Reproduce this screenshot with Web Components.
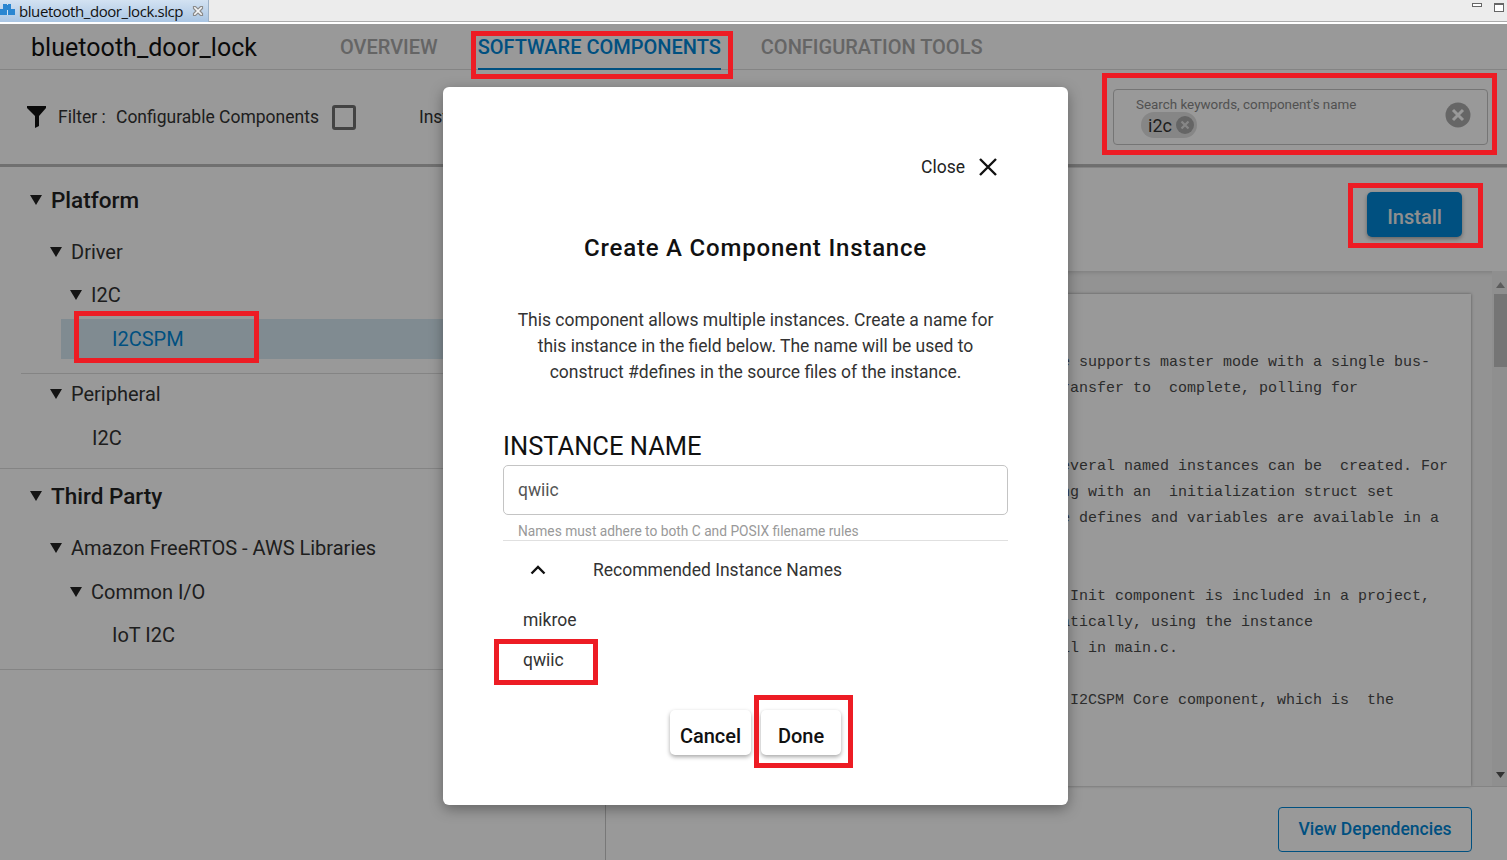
<!DOCTYPE html>
<html>
<head>
<meta charset="utf-8">
<title>bluetooth_door_lock.slcp</title>
<style>
  html, body { margin: 0; height: 100%; overflow: hidden; background: #fff; }
  body { font-family: Roboto, "Liberation Sans", sans-serif; color: #333; }
  .page { position: relative; width: 1507px; height: 860px; display: flex; flex-direction: column; overflow: hidden; }
  .main { flex: 1; display: flex; min-height: 0; }
</style>
</head>
<body>
<div class="page">
  <editor-tabbar name="bluetooth_door_lock.slcp"></editor-tabbar>
  <project-header name="bluetooth_door_lock"></project-header>
  <filter-bar></filter-bar>
  <div class="main">
    <component-tree>
      <tree-row heading arrow indent="51" style="margin-top:12px">Platform</tree-row>
      <tree-row arrow indent="71" style="margin-top:10px">Driver</tree-row>
      <tree-row arrow indent="91" style="margin-top:1px">I2C</tree-row>
      <tree-row selected indent="112" style="margin-top:3px">I2CSPM</tree-row>
      <tree-line inset="21" style="margin-top:14px"></tree-line>
      <tree-row arrow indent="71" style="margin-top:-1px">Peripheral</tree-row>
      <tree-row indent="92" style="margin-top:2px">I2C</tree-row>
      <tree-line style="margin-top:9px"></tree-line>
      <tree-row heading arrow indent="51" style="margin-top:6px">Third Party</tree-row>
      <tree-row arrow indent="71" style="margin-top:10px">Amazon FreeRTOS - AWS Libraries</tree-row>
      <tree-row arrow indent="91" style="margin-top:2px">Common I/O</tree-row>
      <tree-row indent="112" style="margin-top:1px">IoT I2C</tree-row>
      <tree-line style="margin-top:13px"></tree-line>
    </component-tree>
    <detail-panel></detail-panel>
  </div>

  <modal-scrim></modal-scrim>
  <instance-dialog></instance-dialog>

  <mark-box style="left:471px;top:31px;width:262px;height:48px"></mark-box>
  <mark-box style="left:1102px;top:73px;width:395px;height:82px"></mark-box>
  <mark-box style="left:1348px;top:183px;width:135px;height:65px"></mark-box>
  <mark-box style="left:74px;top:311px;width:185px;height:52px"></mark-box>
  <mark-box style="left:494px;top:639px;width:104px;height:46px"></mark-box>
  <mark-box style="left:754px;top:695px;width:99px;height:73px"></mark-box>
</div>

<script>
  class ShadowBase extends HTMLElement {
    constructor() {
      super();
      this.attachShadow({ mode: 'open' });
    }
    connectedCallback() {
      this.shadowRoot.innerHTML = this.render();
    }
  }

  class EditorTabbar extends ShadowBase {
    render() {
      return `
        <style>
          :host { display: flex; height: 24px; flex: none; box-sizing: border-box; background: #ececec; border-bottom: 2px solid #fff; }
          .tab { width: 209px; height: 22px; box-sizing: border-box; display: flex; align-items: center; gap: 4px;
                 background: linear-gradient(#d3e2f2, #a9c5e3); border-right: 1px solid #9db2c8; }
          .tab svg.icon { flex: none; }
          .name { font: 15px "Open Sans", "Noto Sans", sans-serif; letter-spacing: -.42px; color: #111; white-space: nowrap; width: 169px; }
          .rest { flex: 1; height: 22px; box-sizing: border-box; border-bottom: 1px solid #ababab; display: flex; justify-content: flex-end; gap: 12px; padding: 3px 3px 0 0; }
          .min { width: 10px; height: 4px; box-sizing: border-box; border: 1px solid #666; background: #fff; }
          .max { width: 10px; height: 9px; box-sizing: border-box; border: 1px solid #666; border-top-width: 2px; background: #fff; }
        </style>
        <div class="tab">
          <svg class="icon" width="15" height="22" viewBox="0 0 15 22">
            <path fill="#2a86d1" d="M3 4h4v1h1V4h3v5h4v6H0V9h3z"/>
            <path fill="#cfe0f1" d="M7 10h1v5H7z"/>
          </svg>
          <span class="name">${this.getAttribute('name')}</span>
          <svg width="12" height="12" viewBox="0 0 12 12" fill="#f4f6f8" stroke="#8b8b8b" stroke-width="1.2">
            <path d="M1.500 1.500h2L6 4l2.500-2.500h2v2L8 6l2.500 2.500v2h-2L6 8l-2.500 2.500h-2v-2L4 6 1.500 3.500z"/>
          </svg>
        </div>
        <div class="rest"><div class="min"></div><div class="max"></div></div>
      `;
    }
  }

  class ProjectHeader extends ShadowBase {
    render() {
      return `
        <style>
          :host { display: flex; flex: none; height: 46px; box-sizing: border-box; border-bottom: 1px solid #dcdcdc; align-items: stretch; background: #fff; }
          h1 { margin: 0 0 0 31px; width: 309px; font: 400 25px/47px Roboto, sans-serif; letter-spacing: .04px; color: #111; }
          nav { display: flex; gap: 40px; }
          a { font: 500 20px/47px Roboto, sans-serif; color: #a8a8a8; height: 46px; box-sizing: border-box; }
          a.on { color: #0086d6; border-bottom: 2px solid #0086d6; }
        </style>
        <h1>${this.getAttribute('name')}</h1>
        <nav>
          <a>OVERVIEW</a>
          <a class="on">SOFTWARE COMPONENTS</a>
          <a>CONFIGURATION TOOLS</a>
        </nav>
      `;
    }
  }

  class FilterBar extends ShadowBase {
    render() {
      return `
        <style>
          :host { display: flex; flex: none; height: 97px; box-sizing: border-box; align-items: center; padding-left: 27px;
                  border-bottom: 3px solid #bbb; font: 17.5px Roboto, sans-serif; color: #333; background: #fff; }
          svg.funnel { flex: none; margin-right: 12px; }
          .label { width: 58px; flex: none; white-space: nowrap; margin-top: -1px; }
          .text { margin-top: -1px; }
          .check { width: 24px; height: 25px; box-sizing: border-box; border: 3px solid #707070; border-radius: 3px; margin: 0 63px 0 13px; flex: none; }
          .search { margin-left: auto; margin-right: 19px; width: 375px; height: 56px; box-sizing: border-box; border: 1px solid #c4c4c4; border-radius: 4px;
                    position: relative; padding: 7px 0 0 22px; }
          .hint { font-size: 13.4px; line-height: 15px; color: #888; }
          .chip { display: inline-flex; align-items: center; height: 26px; margin: 0 0 0 5px; padding: 0 3px 0 7px; gap: 4px; border-radius: 13px; background: #e0e0e0; color: #333; font-size: 18px; }
          .clear { position: absolute; right: 16px; top: 12px; }
        </style>
        <svg class="funnel" width="19" height="22" viewBox="0 0 19 22"><path fill="#111" d="M0 0h19v2l-7 8v10l-4 2V10L0 2z"/></svg>
        <span class="label">Filter :</span>
        <span class="text">Configurable Components</span>
        <span class="check"></span>
        <span class="text">Inst</span>
        <div class="search">
          <div class="hint">Search keywords, component's name</div>
          <span class="chip">i2c
            <svg width="18" height="18" viewBox="0 0 18 18"><circle cx="9" cy="9" r="9" fill="#a8a8a8"/><path d="M5.500 5.500l7 7m0-7l-7 7" stroke="#e0e0e0" stroke-width="2.2"/></svg>
          </span>
          <svg class="clear" width="26" height="26" viewBox="0 0 26 26"><circle cx="13" cy="13" r="12.500" fill="#ababab"/><path d="M8 8l10 10m0-10L8 18" stroke="#fff" stroke-width="3"/></svg>
        </div>
      `;
    }
  }

  class ComponentTree extends ShadowBase {
    render() {
      return `
        <style>
          :host { display: block; flex: none; width: 605px; box-sizing: content-box; border-right: 1px solid #c8c8c8; background: #fff; }
        </style>
        <slot></slot>
      `;
    }
  }

  class TreeRow extends ShadowBase {
    render() {
      const indent = Number(this.getAttribute('indent'));
      const arrow = this.hasAttribute('arrow');
      const selected = this.hasAttribute('selected');
      const left = selected ? 61 : 0;
      return `
        <style>
          :host { display: block; }
          .row { display: flex; align-items: center; height: ${selected ? 40 : 42}px; margin-left: ${left}px;
                 padding-left: ${(arrow ? indent - 21 : indent) - left}px; font: 20px Roboto, sans-serif; color: #333; }
          :host([heading]) .row { font: 500 22.5px Roboto, sans-serif; color: #222; }
          :host([selected]) .row { background: #d6e8f2; color: #0086d6; }
          svg { margin-right: 9px; flex: none; }
        </style>
        <div class="row">
          ${arrow ? '<svg width="12" height="10" viewBox="0 0 12 10"><path fill="#222" d="M0 0h12L6 10z"/></svg>' : ''}
          <slot></slot>
        </div>
      `;
    }
  }

  class TreeLine extends ShadowBase {
    render() {
      return `
        <style>
          :host { display: block; height: 1px; margin-left: ${this.getAttribute('inset') || 0}px; background: #dcdcdc; }
        </style>
      `;
    }
  }

  class DetailPanel extends ShadowBase {
    render() {
      const lines = [
        'e supports master mode with a single bus-',
        'ransfer to  complete, polling for',
        '',
        '',
        'everal named instances can be  created. For',
        'ng with an  initialization struct set',
        'e defines and variables are available in a',
        '',
        '',
        ' Init component is included in a project,',
        'atically, using the instance',
        'll in main.c.',
        '',
        ' I2CSPM Core component, which is  the'
      ];
      return `
        <style>
          :host { display: flex; flex-direction: column; flex: 1; min-width: 0; background: #fff; }
          .top { flex: none; height: 104px; box-sizing: border-box; border-top: 1px solid #ddd; display: flex; justify-content: flex-end; padding: 24px 45px 0 0;
                 box-shadow: 0 2px 4px rgba(0,0,0,.12); position: relative; }
          .install { width: 95px; height: 45px; padding: 4px 0 0; border: 0; border-radius: 5px; background: #0086d6; color: #eee; font: 500 20px Roboto, sans-serif; box-shadow: 0 2px 4px rgba(0,0,0,.35); }
          .body { flex: 1; display: flex; min-height: 0; background: #f5f5f5; }
          .sheet { flex: 1; margin: 23px 21px 0 24px; background: #fff; box-shadow: 0 0 3px rgba(0,0,0,.4); overflow: hidden; padding: 56px 0 0 431px; box-sizing: border-box; }
          pre { margin: 0; font: 15px/26px "Liberation Mono", monospace; color: #4a4a4a; }
          .bar { width: 15px; flex: none; position: relative; background: #eee; }
          .thumb { position: absolute; left: 2px; right: 0; top: 23px; height: 73px; background: #c4c4c4; }
          .bar svg { position: absolute; left: 4px; }
          .foot { flex: none; height: 74px; box-sizing: border-box; border-top: 1px solid #ddd; display: flex; justify-content: flex-end; padding: 20px 35px 0 0; }
          .deps { width: 194px; height: 45px; padding: 0 0 2px; box-sizing: border-box; background: #fff; border: 1px solid #0086d6; border-radius: 4px; color: #0086d6; font: 500 17.5px Roboto, sans-serif; }
        </style>
        <div class="top"><button class="install">Install</button></div>
        <div class="body">
          <div class="sheet"><pre>${lines.join('\n')}</pre></div>
          <div class="bar">
            <svg style="top:11px" width="9" height="6" viewBox="0 0 9 6"><path fill="#9a9a9a" d="M4.500 0L9 6H0z"/></svg>
            <div class="thumb"></div>
            <svg style="bottom:8px" width="9" height="6" viewBox="0 0 9 6"><path fill="#555" d="M0 0h9L4.500 6z"/></svg>
          </div>
        </div>
        <div class="foot"><button class="deps">View Dependencies</button></div>
      `;
    }
  }

  class ModalScrim extends ShadowBase {
    render() {
      return `<style>:host { position: absolute; left: 0; right: 0; top: 24px; bottom: 0; background: rgba(0,0,0,.4); }</style>`;
    }
  }

  class InstanceDialog extends ShadowBase {
    render() {
      return `
        <style>
          :host { position: absolute; left: 443px; top: 87px; width: 625px; height: 718px; box-sizing: border-box; padding: 68px 60px 0;
                  background: #fff; border-radius: 6px; box-shadow: 0 4px 14px rgba(0,0,0,.35); color: #222; font: 17.5px Roboto, sans-serif; }
          .close { display: flex; justify-content: flex-end; align-items: center; gap: 13px; height: 24px; color: #222; padding-right: 10px; }
          h2 { margin: 53px 0 0; font: 500 24px/32px Roboto, sans-serif; letter-spacing: .8px; text-align: center; color: #111; }
          p { margin: 43px 0 0; text-align: center; line-height: 26px; color: #333; }
          .name { margin-top: 46px; font: 400 25.5px/30px Roboto, sans-serif; color: #111; }
          .field { margin-top: 4px; height: 50px; box-sizing: border-box; border: 1px solid #c4c4c4; border-radius: 5px; padding: 0 0 1px 14px; display: flex; align-items: center; color: #555; }
          .help { margin: 8px 0 0 15px; font-size: 13.75px; line-height: 16px; color: #999; }
          .rule { margin-top: 1px; height: 1px; background: #e0e0e0; }
          .rec { margin-top: 17px; height: 24px; display: flex; align-items: center; color: #333; }
          .rec svg { margin: 0 47px 0 27px; }
          .pick { margin: 16px 0 0 20px; line-height: 24px; color: #333; }
          .pick.first { margin-top: 26px; }
          .actions { margin-top: 38px; display: flex; justify-content: center; gap: 10px; }
          button { width: 80px; height: 45px; padding: 6px 0 0; border: 0; border-radius: 5px; background: #fff; color: #111; font: 500 20px Roboto, sans-serif; box-shadow: 0 2px 4px rgba(0,0,0,.35); }
          button.cancel { width: 81px; }
        </style>
        <div class="close">Close
          <svg width="20" height="20" viewBox="0 0 20 20"><path d="M2 2l16 16m0-16L2 18" stroke="#111" stroke-width="2.4"/></svg>
        </div>
        <h2>Create A Component Instance</h2>
        <p>This component allows multiple instances. Create a name for<br>this instance in the field below. The name will be used to<br>construct #defines in the source files of the instance.</p>
        <div class="name">INSTANCE NAME</div>
        <div class="field">qwiic</div>
        <div class="help">Names must adhere to both C and POSIX filename rules</div>
        <div class="rule"></div>
        <div class="rec">
          <svg width="16" height="10" viewBox="0 0 16 10" fill="none"><path d="M1.500 8.500L8 2l6.500 6.500" stroke="#111" stroke-width="2.400"/></svg>
          Recommended Instance Names
        </div>
        <div class="pick first">mikroe</div>
        <div class="pick">qwiic</div>
        <div class="actions"><button class="cancel">Cancel</button><button>Done</button></div>
      `;
    }
  }

  class MarkBox extends ShadowBase {
    render() {
      return `<style>:host { position: absolute; box-sizing: border-box; border: 5px solid #ed1c24; }</style>`;
    }
  }

  customElements.define('editor-tabbar', EditorTabbar);
  customElements.define('project-header', ProjectHeader);
  customElements.define('filter-bar', FilterBar);
  customElements.define('component-tree', ComponentTree);
  customElements.define('tree-row', TreeRow);
  customElements.define('tree-line', TreeLine);
  customElements.define('detail-panel', DetailPanel);
  customElements.define('modal-scrim', ModalScrim);
  customElements.define('instance-dialog', InstanceDialog);
  customElements.define('mark-box', MarkBox);
</script>
</body>
</html>
